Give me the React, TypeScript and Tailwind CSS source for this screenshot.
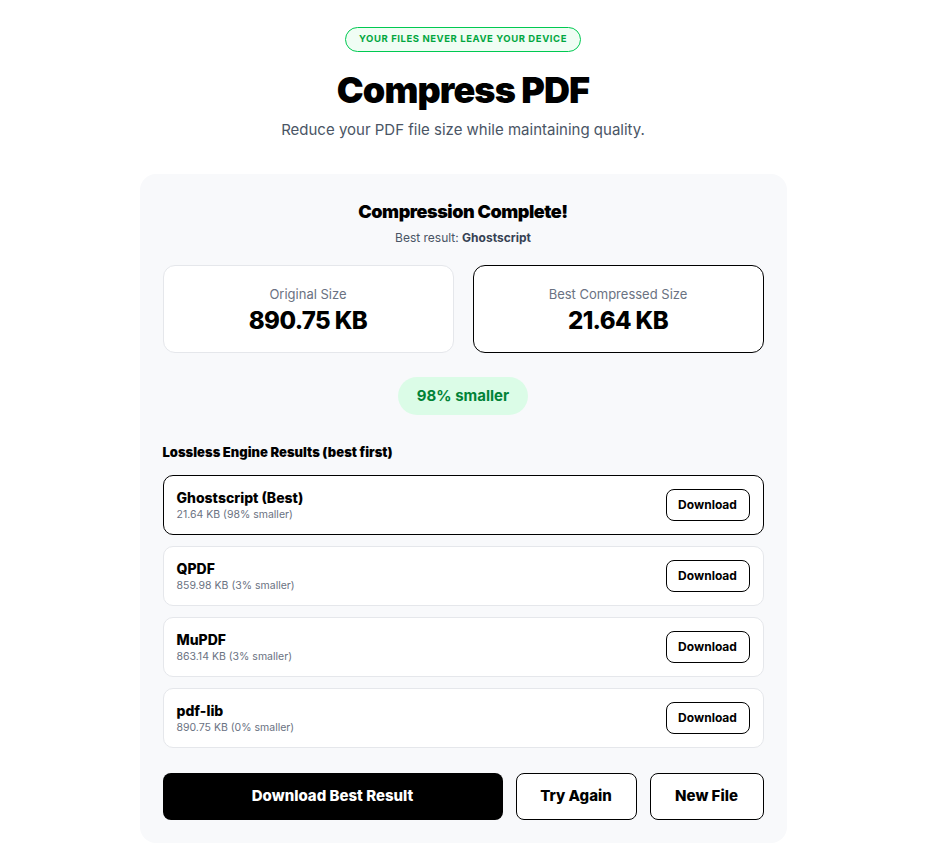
import React from 'react'

type Engine = {
  name: string
  detail: string
  best?: boolean
}

const ENGINES: Engine[] = [
  { name: 'Ghostscript (Best)', detail: '21.64 KB (98% smaller)', best: true },
  { name: 'QPDF', detail: '859.98 KB (3% smaller)' },
  { name: 'MuPDF', detail: '863.14 KB (3% smaller)' },
  { name: 'pdf-lib', detail: '890.75 KB (0% smaller)' },
]

function StatBox({ label, value, highlight }: { label: string; value: string; highlight?: boolean }) {
  return (
    <div
      className={`flex h-[88px] flex-col items-center rounded-xl bg-white pt-[20px] ${
        highlight ? 'border border-black' : 'border border-gray-200'
      }`}
    >
      <p className="text-[13px] leading-4 text-gray-500">{label}</p>
      <p className="mt-[3px] text-[24px] font-extrabold leading-8 tracking-tight text-black">{value}</p>
    </div>
  )
}

function EngineRow({ engine }: { engine: Engine }) {
  return (
    <div
      className={`flex h-[60px] items-center justify-between rounded-[10px] bg-white pl-[13px] pr-[13px] ${
        engine.best ? 'border border-black' : 'border border-gray-200'
      }`}
    >
      <div className="flex flex-col">
        <span className="text-[14px] font-extrabold leading-[18px] text-black">{engine.name}</span>
        <span className="text-[10.5px] leading-[15px] text-gray-500">{engine.detail}</span>
      </div>
      <button className="h-[32px] w-[84px] rounded-lg border border-black bg-white text-[12px] font-bold text-black">
        Download
      </button>
    </div>
  )
}

export default function App() {
  return (
    <div
      className="min-h-screen bg-white pt-[27px] pr-[6px] pb-[12px]"
      style={{ fontFamily: 'Inter, "Noto Sans", "Liberation Sans", sans-serif' }}
    >
      {/* Header */}
      <div className="flex flex-col items-center">
        <span className="flex h-[25px] items-center rounded-full border border-green-500 bg-green-50 px-[13px] text-[9.5px] font-bold uppercase tracking-[0.06em] text-green-600">
          Your files never leave your device
        </span>
        <h1 className="mt-[16px] text-[36px] font-black leading-[44px] tracking-tight text-black">Compress PDF</h1>
        <p className="mt-[6px] text-[15px] leading-6 text-gray-600">
          Reduce your PDF file size while maintaining quality.
        </p>
      </div>

      {/* Result card */}
      <div className="mx-auto mt-[32px] w-[647px] rounded-2xl bg-[#f8f9fb] px-[23px] pt-[24px] pb-[23px]">
        <div className="flex flex-col items-center">
          <h2 className="text-[18px] font-black leading-7 tracking-tight text-black">Compression Complete!</h2>
          <p className="mt-[4px] text-[12px] leading-4 text-gray-600">
            Best result: <span className="font-bold text-gray-700">Ghostscript</span>
          </p>
        </div>

        <div className="mt-[19px] grid grid-cols-2 gap-[19px]">
          <StatBox label="Original Size" value="890.75 KB" />
          <StatBox label="Best Compressed Size" value="21.64 KB" highlight />
        </div>

        <div className="mt-[24px] flex justify-center">
          <span className="flex h-[38px] w-[130px] items-center justify-center rounded-full bg-green-100 text-[15px] font-bold text-green-700">
            98% smaller
          </span>
        </div>

        <h3 className="mt-[27px] text-[13px] font-black leading-5 text-black">
          Lossless Engine Results (best first)
        </h3>

        <div className="mt-[13px] flex flex-col gap-[11px]">
          {ENGINES.map(e => (
            <EngineRow key={e.name} engine={e} />
          ))}
        </div>

        <div className="mt-[25px] flex gap-[13px]">
          <button className="h-[47px] w-[340px] rounded-lg bg-black text-[15px] font-extrabold text-white">
            Download Best Result
          </button>
          <button className="h-[47px] w-[121px] rounded-lg border border-black bg-white text-[15px] font-extrabold text-black">
            Try Again
          </button>
          <button className="h-[47px] flex-1 rounded-lg border border-black bg-white text-[15px] font-extrabold text-black">
            New File
          </button>
        </div>
      </div>
    </div>
  )
}
